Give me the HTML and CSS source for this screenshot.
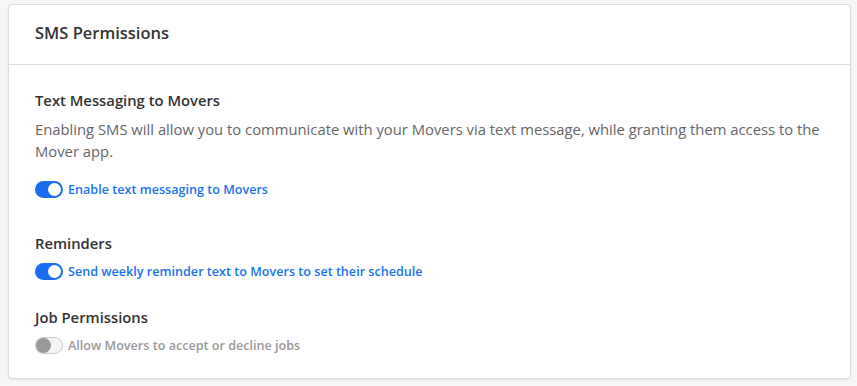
FILE: index.html
```html
<!DOCTYPE html>
<html lang="en">
<head>
  <meta charset="UTF-8">
  <meta name="viewport" content="width=device-width, initial-scale=1.0">
  <title>SMS Permissions</title>
  <link rel="stylesheet" href="styles.css">
</head>
<body>
  <section class="card">
    <header class="card-header">
      <h2>SMS Permissions</h2>
    </header>

    <div class="card-body">
      <div class="group first">
        <h3>Text Messaging to Movers</h3>
        <p class="help">Enabling SMS will allow you to communicate with your Movers via text message, while granting them access to the Mover app.</p>
        <label class="switch-row on">
          <span class="switch"><span class="knob"></span></span>
          Enable text messaging to Movers
        </label>
      </div>

      <div class="group">
        <h3>Reminders</h3>
        <label class="switch-row on">
          <span class="switch"><span class="knob"></span></span>
          Send weekly reminder text to Movers to set their schedule
        </label>
      </div>

      <div class="group">
        <h3>Job Permissions</h3>
        <label class="switch-row off">
          <span class="switch"><span class="knob"></span></span>
          Allow Movers to accept or decline jobs
        </label>
      </div>
    </div>
  </section>
</body>
</html>
```

FILE: styles.css
```css
body {
  font-family: "Open Sans", Lato, Arial, sans-serif;
  margin: 0;
  padding: 4px 6px 5px 8px;
  background-color: #f6f6f6;
  color: #333;
}

.card {
  background: #fff;
  border: 1px solid #dcdcdc;
  border-radius: 4px;
  box-shadow: 0 1px 2px rgba(0, 0, 0, 0.08);
}

.card-header {
  height: 60px;
  box-sizing: border-box;
  display: flex;
  align-items: center;
  padding: 0 26px 5px;
  border-bottom: 1px solid #dedede;
}

h2 {
  margin: 0;
  font-size: 16.5px;
  font-weight: 600;
  color: #333;
}

.card-body {
  padding: 25px 26px 22px;
}

.group {
  margin-bottom: 25px;
}

.group.first {
  margin-bottom: 33px;
}

.group:last-child {
  margin-bottom: 0;
}

h3 {
  margin: 0 0 7px;
  font-size: 14.8px;
  line-height: 20px;
  font-weight: 600;
  color: #333;
}

.first h3 {
  margin-bottom: 8px;
}

.help {
  margin: 0 0 16px;
  font-size: 14.8px;
  line-height: 22px;
  color: #666;
}

.switch-row {
  display: flex;
  align-items: center;
  gap: 5px;
  font-size: 12.6px;
  font-weight: 600;
  color: #1a73f0;
  height: 22px;
}

.switch-row.off {
  color: #999;
}

.switch {
  width: 28px;
  height: 17px;
  border-radius: 9px;
  box-sizing: border-box;
  display: flex;
  align-items: center;
  padding: 2px;
  background: #1a6cf0;
  justify-content: flex-end;
}

.knob {
  width: 13px;
  height: 13px;
  border-radius: 50%;
  background: #fff;
}

.off .switch {
  background: #f4f4f4;
  border: 1px solid #c8c8c8;
  justify-content: flex-start;
  padding: 0;
}

.off .knob {
  width: 15px;
  height: 15px;
  background: #999;
}
```
